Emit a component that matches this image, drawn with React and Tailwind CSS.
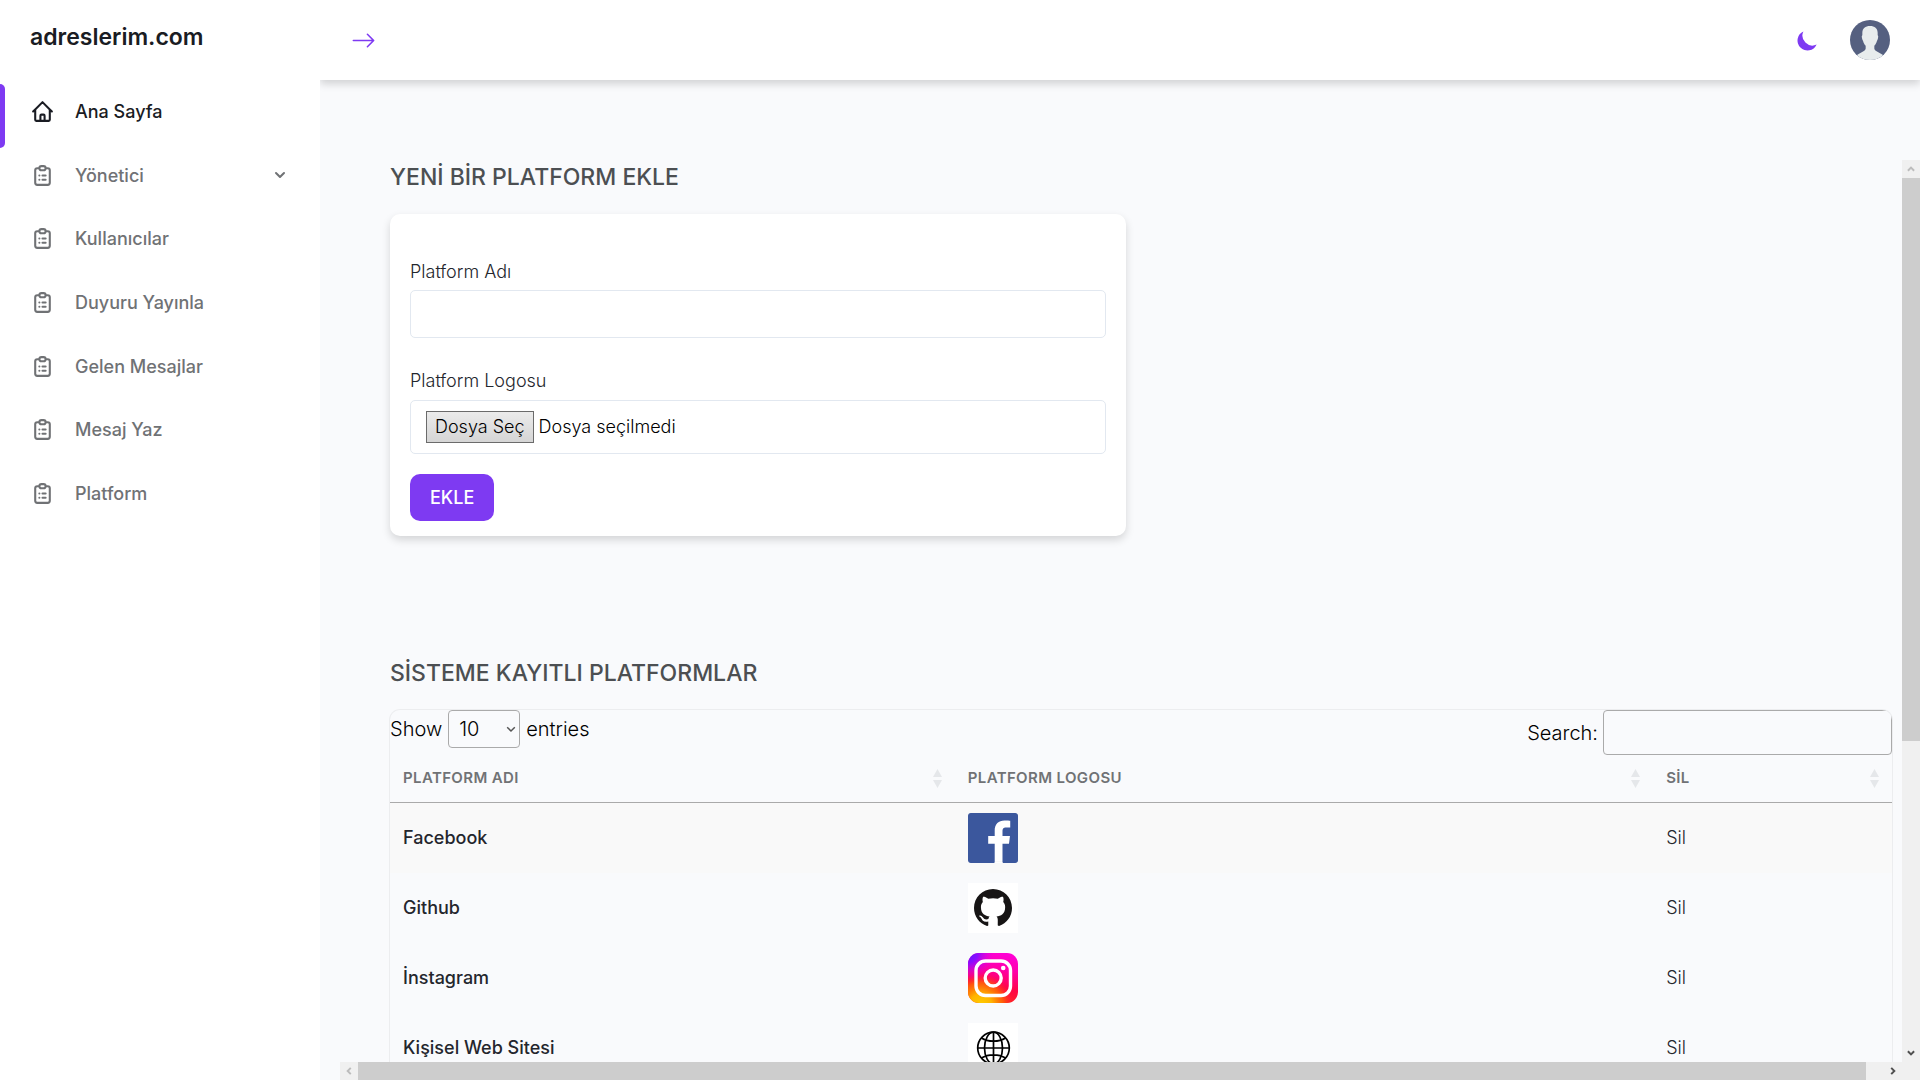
import { BsArrowRight, BsGithub } from "react-icons/bs";

const HOME =
  "M3 12l2-2m0 0l7-7 7 7M5 10v10a1 1 0 001 1h3m10-11l2 2m-2-2v10a1 1 0 01-1 1h-3m-6 0a1 1 0 001-1v-4a1 1 0 011-1h2a1 1 0 011 1v4a1 1 0 001 1m-6 0h6";
const CLIPBOARD =
  "M9 5H7a2 2 0 00-2 2v12a2 2 0 002 2h10a2 2 0 002-2V7a2 2 0 00-2-2h-2M9 5a2 2 0 002 2h2a2 2 0 002-2M9 5a2 2 0 012-2h2a2 2 0 012 2m-3 7h3m-3 4h3m-6-4h.01M9 16h.01";

const NAV = [
  { label: "Ana Sayfa", icon: HOME, active: true },
  { label: "Yönetici", icon: CLIPBOARD, menu: true },
  { label: "Kullanıcılar", icon: CLIPBOARD },
  { label: "Duyuru Yayınla", icon: CLIPBOARD },
  { label: "Gelen Mesajlar", icon: CLIPBOARD },
  { label: "Mesaj Yaz", icon: CLIPBOARD },
  { label: "Platform", icon: CLIPBOARD },
];

function OutlineIcon({ d }) {
  return (
    <svg className="size-[25px] shrink-0" viewBox="0 0 24 24" fill="none" stroke="currentColor" strokeWidth="2" strokeLinecap="round" strokeLinejoin="round" aria-hidden="true">
      <path d={d} />
    </svg>
  );
}

function ChevronDown({ className }) {
  return (
    <svg className={className} viewBox="0 0 20 20" fill="currentColor" aria-hidden="true">
      <path d="M5.293 7.293a1 1 0 011.414 0L10 10.586l3.293-3.293a1 1 0 111.414 1.414l-4 4a1 1 0 01-1.414 0l-4-4a1 1 0 010-1.414z" />
    </svg>
  );
}

function NavItem({ item }) {
  const inner = (
    <>
      <OutlineIcon d={item.icon} />
      <span className="ml-5">{item.label}</span>
      {item.menu && <ChevronDown className="ml-auto size-5" />}
    </>
  );
  return (
    <li className="relative flex">
      {item.active && <span className="absolute inset-y-0 left-0 w-[5px] rounded-r-[5px] bg-[#7e3af2]" />}
      {item.menu ? (
        <button type="button" className="flex w-full items-center px-[30px] pb-2">{inner}</button>
      ) : (
        <a href="#" className={item.active ? "flex w-full items-center px-[30px] pb-2 text-[#1a1c23]" : "flex w-full items-center px-[30px] pb-2"}>
          {inner}
        </a>
      )}
    </li>
  );
}

function Sidebar() {
  return (
    <aside className="z-20 w-80 shrink-0 bg-white pt-5">
      <a href="#" className="block px-[30px] text-[23px] leading-[34px] font-semibold text-[#1a1c23]">adreslerim.com</a>
      <nav className="mt-[30px]">
        <ul className="grid h-[445px] auto-rows-fr text-[18px] font-medium text-[#707275]">
          {NAV.map((item) => <NavItem key={item.label} item={item} />)}
        </ul>
      </nav>
    </aside>
  );
}

function Avatar() {
  return (
    <svg className="size-10 rounded-full" viewBox="0 0 60 60" aria-hidden="true">
      <rect width="60" height="60" fill="#556080" />
      <path d="M30 9c-7 0-11.500 3.500-11.500 10v4c-1 1-1 2-.5 4 .3 2 .8 3 1.500 4 .8 3 2 5.500 4 7.500v4c0 1.500-.5 2.500-2 3.500L11 52v8h38v-8l-10.500-6c-1.500-1-2-2-2-3.500v-4c2-2 3.200-4.500 4-7.500.7-1 1.200-2 1.500-4 .5-2 .5-3-.5-4v-4C41.500 12.500 37 9 30 9z" fill="#e7eced" />
    </svg>
  );
}

function Header() {
  return (
    <header className="z-10 flex h-20 shrink-0 items-center bg-white pr-[30px] pl-[31px] text-[#7e3af2] shadow-[0_4px_8px_rgba(0,0,0,0.16)]">
      <button type="button" aria-label="Menü">
        <BsArrowRight className="size-[25px]" />
      </button>
      <button type="button" aria-label="Tema" className="ml-auto">
        <svg className="size-[25px]" viewBox="0 0 20 20" fill="currentColor" aria-hidden="true">
          <path d="M17.293 13.293A8 8 0 016.707 2.707a8.001 8.001 0 1010.586 10.586z" />
        </svg>
      </button>
      <button type="button" aria-label="Hesap" className="ml-[30px]">
        <Avatar />
      </button>
    </header>
  );
}

function FacebookLogo() {
  return (
    <svg className="size-[50px]" viewBox="0 0 24 24" aria-label="Facebook">
      <rect x="1" y="1" width="22" height="22" fill="#fff" />
      <path fill="#3b579d" d="M22.676 0H1.324C.593 0 0 .593 0 1.324v21.352C0 23.408.593 24 1.324 24h11.494v-9.294H9.689v-3.621h3.129V8.41c0-3.099 1.894-4.785 4.659-4.785 1.325 0 2.464.097 2.796.141v3.240h-1.921c-1.500 0-1.792.721-1.792 1.771v2.311h3.584l-.465 3.630H16.560V24h6.115c.733 0 1.325-.592 1.325-1.324V1.324C24 .593 23.408 0 22.676 0" />
      <path d="M12.800 23.500h3.760v.5H12.800z" fill="#fff" />
    </svg>
  );
}

function GithubLogo() {
  return (
    <div className="flex size-[50px] items-center justify-center bg-white">
      <BsGithub className="size-[38px] text-[#171515]" />
    </div>
  );
}

function InstagramLogo() {
  return (
    <svg className="size-[50px]" viewBox="0 0 50 50" aria-label="İnstagram">
      <defs>
        <linearGradient id="ig-base" x1="0.6" y1="0" x2="0.4" y2="1">
          <stop offset="0" stopColor="#ff00d4" />
          <stop offset="0.3" stopColor="#ff00a8" />
          <stop offset="0.65" stopColor="#ff0548" />
          <stop offset="1" stopColor="#ff2a1c" />
        </linearGradient>
        <radialGradient id="ig-warm" cx="0.25" cy="1.05" r="0.65">
          <stop offset="0" stopColor="#ffcf00" />
          <stop offset="0.35" stopColor="#ffb400" />
          <stop offset="0.7" stopColor="#ff6a00" stopOpacity="0.8" />
          <stop offset="1" stopColor="#ff2a20" stopOpacity="0" />
        </radialGradient>
        <radialGradient id="ig-cool" cx="0" cy="0" r="0.55">
          <stop offset="0" stopColor="#5b16ff" />
          <stop offset="0.35" stopColor="#8a0cff" />
          <stop offset="1" stopColor="#f000e0" stopOpacity="0" />
        </radialGradient>
      </defs>
      <rect width="50" height="50" rx="11" fill="url(#ig-base)" />
      <rect width="50" height="50" rx="11" fill="url(#ig-warm)" />
      <rect width="50" height="50" rx="11" fill="url(#ig-cool)" />
      <g fill="none" stroke="#fff" strokeWidth="3.4">
        <rect x="8" y="8" width="34.500" height="34.500" rx="9.500" />
        <circle cx="25.200" cy="25" r="8" />
      </g>
      <circle cx="35.200" cy="15" r="2.300" fill="#fff" />
    </svg>
  );
}

function GlobeLogo() {
  return (
    <svg className="size-[50px]" viewBox="0 0 50 50" aria-label="Web">
      <rect width="50" height="50" fill="#fff" />
      <g fill="none" stroke="#000" strokeWidth="1.700">
        <circle cx="25.500" cy="25" r="15.800" />
        <ellipse cx="25.500" cy="25" rx="9" ry="15.800" />
        <path d="M25.500 9.200v31.600M9.700 25h31.600M13.500 15c3.500 2.300 7.500 3.200 12 3.200s8.500-.9 12-3.200M13.500 35c3.500-2.300 7.500-3.200 12-3.200s8.500.9 12 3.200" />
      </g>
    </svg>
  );
}

const COLUMNS = [
  { label: "PLATFORM ADI", width: "w-[37.6%]" },
  { label: "PLATFORM LOGOSU", width: "w-[46.5%]" },
  { label: "SİL", width: "w-[15.9%]" },
];

const ROWS = [
  { name: "Facebook", Logo: FacebookLogo },
  { name: "Github", Logo: GithubLogo },
  { name: "İnstagram", Logo: InstagramLogo },
  { name: "Kişisel Web Sitesi", Logo: GlobeLogo },
];

function PlatformForm() {
  return (
    <form className="mt-5 w-[49%] rounded-[10px] bg-white px-5 pt-[45px] pb-[15px] text-[18px] leading-[26px] font-light text-[#24262d] shadow-[0_4px_8px_rgba(0,0,0,0.15)]">
      <label htmlFor="platform-name" className="block">Platform Adı</label>
      <input id="platform-name" type="text" className="mt-[5px] block h-12 w-full rounded-[5px] border border-[#e2e8f0] bg-white px-[15px] outline-none" />
      <label htmlFor="platform-logo" className="mt-[30px] block">Platform Logosu</label>
      <div className="mt-[6px] flex h-[54px] items-center gap-[5px] rounded-[5px] border border-[#e2e8f0] px-[15px] text-black">
        <input id="platform-logo" type="file" className="sr-only" />
        <label htmlFor="platform-logo" className="border border-[#6b6b6b] bg-linear-to-b from-[#ebebeb] to-[#d5d5d5] px-2 py-[2px]">Dosya Seç</label>
        <span>Dosya seçilmedi</span>
      </div>
      <button type="button" className="mt-5 rounded-[10px] bg-[#7e3af2] px-5 py-[11px] leading-[25px] font-medium text-white">EKLE</button>
    </form>
  );
}

function PlatformTable() {
  return (
    <div className="mt-5 overflow-hidden rounded-[10px] ring-1 ring-black/5">
      <div className="flex items-start justify-between text-[20px] font-light text-black">
        <div className="flex items-center gap-[6px]">
          <label htmlFor="page-size">Show</label>
          <div className="relative">
            <select id="page-size" defaultValue="10" className="block h-[38px] w-[72px] appearance-none rounded-[4px] border border-[#aaa] bg-transparent pl-[10px]">
              <option>10</option>
              <option>25</option>
              <option>50</option>
              <option>100</option>
            </select>
            <svg className="pointer-events-none absolute top-[16px] right-[4px] h-[7px] w-[10px] text-[#555]" viewBox="0 0 10 7" fill="none" stroke="currentColor" strokeWidth="1.500" aria-hidden="true">
              <path d="M1.200 1.300L5 5l3.800-3.700" />
            </svg>
          </div>
          <span>entries</span>
        </div>
        <div className="flex items-center gap-[5px]">
          <label htmlFor="search">Search:</label>
          <input id="search" type="search" className="h-[45px] w-[289px] rounded-[4px] border border-[#aaa] bg-transparent px-[6px] outline-none" />
        </div>
      </div>
      <table className="w-full table-fixed border-separate border-spacing-0 text-left text-[#24262d]">
        <thead className="text-[15px] leading-6 text-[#707275]">
          <tr>
            {COLUMNS.map((c) => (
              <th key={c.label} scope="col" className={`${c.width} h-12 border-b border-[#aaa] px-[13px] pb-[2px] font-semibold tracking-wide`}>
                <div className="flex items-center justify-between">
                  {c.label}
                  <svg className="h-5 w-[9px]" viewBox="0 0 9 20" fill="#e5e7ea" aria-hidden="true">
                    <path d="M4.500 1L9 9H0zM0 12h9l-4.500 8z" />
                  </svg>
                </div>
              </th>
            ))}
          </tr>
        </thead>
        <tbody className="text-[18px]">
          {ROWS.map(({ name, Logo }) => (
            <tr key={name} className="first:bg-[#f9f9f9]">
              <td className="px-[13px] pb-[2px] font-medium">{name}</td>
              <td className="h-[70px] px-[13px] py-[10px]"><Logo /></td>
              <td className="px-[13px] pb-[2px] font-light"><button type="button">Sil</button></td>
            </tr>
          ))}
        </tbody>
      </table>
    </div>
  );
}

function ScrollArrow({ turn, color }) {
  return (
    <span className="flex size-[18px] shrink-0 items-center justify-center bg-[#f0f0f0]">
      <svg className={`size-2 ${turn} ${color}`} viewBox="0 0 9 9" fill="none" stroke="currentColor" strokeWidth="2.200" aria-hidden="true">
        <path d="M1 6.500L4.500 3 8 6.500" />
      </svg>
    </span>
  );
}

export default function App() {
  return (
    <div className="flex h-screen overflow-hidden bg-[#f9fafc] font-[Inter,sans-serif]">
      <Sidebar />
      <div className="flex min-w-0 flex-1 flex-col">
        <Header />
        <main className="mt-20 ml-5 grid min-h-0 flex-1 grid-cols-[minmax(0,1fr)_18px] grid-rows-[minmax(0,1fr)_18px]">
          <div className="overflow-hidden pr-[10px] pl-[50px]">
            <h2 className="text-[23px] leading-[34px] font-medium text-[#4c4f52]">YENİ BİR PLATFORM EKLE</h2>
            <PlatformForm />
            <h2 className="mt-[120px] text-[23px] leading-[34px] font-medium text-[#4c4f52]">SİSTEME KAYITLI PLATFORMLAR</h2>
            <PlatformTable />
          </div>
          <div className="flex flex-col bg-[#f0f0f0]" aria-hidden="true">
            <ScrollArrow turn="rotate-0" color="text-[#bcbcbc]" />
            <div className="min-h-0 flex-1"><div className="h-[65%] bg-[#cdcdcd]" /></div>
            <ScrollArrow turn="rotate-180" color="text-[#505050]" />
          </div>
          <div className="flex bg-[#f0f0f0]" aria-hidden="true">
            <ScrollArrow turn="-rotate-90" color="text-[#bcbcbc]" />
            <div className="min-w-0 flex-1"><div className="h-full w-[98.8%] bg-[#cdcdcd]" /></div>
            <ScrollArrow turn="rotate-90" color="text-[#505050]" />
          </div>
          <div className="bg-[#f0f0f0]" />
        </main>
      </div>
    </div>
  );
}
